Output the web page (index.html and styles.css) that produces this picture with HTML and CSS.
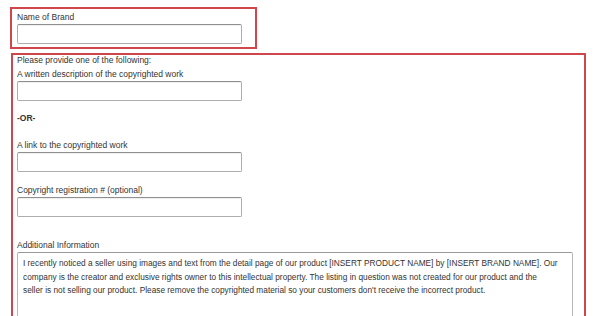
FILE: index.html
```html
<!DOCTYPE html>
<html lang="en">
<head>
<meta charset="UTF-8">
<meta name="viewport" content="width=device-width, initial-scale=1.0">
<title>Report Infringement</title>
<link rel="stylesheet" href="styles.css">
</head>
<body>

<div class="box brand-box">
    <label class="label" for="brandName">Name of Brand</label>
    <input class="text-input" id="brandName" type="text">
</div>

<div class="box work-box">
    <div class="intro">Please provide one of the following:</div>

    <label class="label" for="workDesc">A written description of the copyrighted work</label>
    <input class="text-input" id="workDesc" type="text">

    <div class="or">-OR-</div>

    <label class="label" for="workLink">A link to the copyrighted work</label>
    <input class="text-input" id="workLink" type="text">

    <label class="label label-reg" for="regNumber">Copyright registration # (optional)</label>
    <input class="text-input" id="regNumber" type="text">

    <label class="label label-info" for="addInfo">Additional Information</label>
    <textarea class="text-area" id="addInfo">I recently noticed a seller using images and text from the detail page of our product [INSERT PRODUCT NAME] by [INSERT BRAND NAME]. Our company is the creator and exclusive rights owner to this intellectual property. The listing in question was not created for our product and the
seller is not selling our product. Please remove the copyrighted material so your customers don't receive the incorrect product.</textarea>
</div>

</body>
</html>
```

FILE: styles.css
```css
body {
    margin: 0;
    background: #fff;
    font-family: "Liberation Sans", Arial, sans-serif;
    font-size: 8.5px;
    color: #333;
}
.box {
    border: 2px solid #d0464d;
    box-sizing: border-box;
}
.brand-box {
    margin: 7px 0 0 10px;
    width: 247px;
    height: 42px;
    padding: 2px 5px 0 5px;
}
.work-box {
    margin: 4px 0 0 11px;
    width: 575px;
    height: 266px;
    padding: 0 5px 0 4px;
}
.label {
    display: block;
    line-height: 12px;
}
.intro {
    line-height: 11px;
}
.work-box .label {
    margin-top: 2px;
}
.text-input {
    display: block;
    box-sizing: border-box;
    width: 225px;
    height: 20px;
    margin: 1px 0 0 0;
    border: 1px solid #adadad;
    border-top-color: #8f8f8f;
    border-radius: 2px;
    box-shadow: inset 0 1px 0 rgba(0, 0, 0, .06);
    background: #fff;
    padding: 0 4px;
    font: inherit;
}
.or {
    margin-top: 12px;
    font-weight: bold;
    line-height: 11px;
}
.work-box .or + .label {
    margin-top: 15px;
}
.work-box .label-reg {
    margin-top: 12px;
}
.work-box .label-info {
    margin-top: 22px;
}
.text-area {
    display: block;
    box-sizing: border-box;
    width: 556px;
    height: 66px;
    margin-top: 1px;
    border: 1px solid #b8b8b8;
    border-top-color: #999;
    border-radius: 2px;
    padding: 4px 8px 4px 5px;
    font-family: "Liberation Sans", Arial, sans-serif;
    font-size: 8.3px;
    line-height: 13.5px;
    color: #333;
    resize: none;
    overflow: hidden;
}
```
